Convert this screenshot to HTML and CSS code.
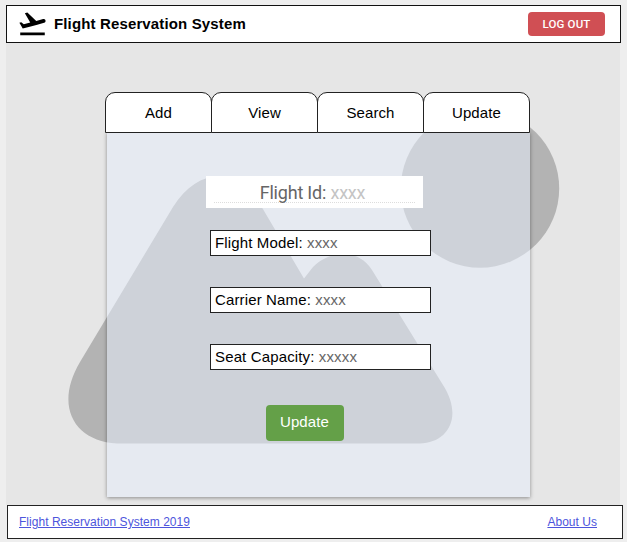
FILE: index.html
```html
<!DOCTYPE html>
<html lang="en">
<head>
<meta charset="utf-8">
<title>Flight Reservation System</title>
<link rel="stylesheet" href="styles.css">
</head>
<body>
<div class="page">
  <header class="header">
    <svg class="logo" viewBox="0 0 24 24"><path d="M2.500 19h19v2h-19zm19.570-9.360c-.21-.8-1.040-1.280-1.840-1.060L14.920 10l-6.900-6.430-1.930.51 4.140 7.170-4.970 1.330-1.970-1.540-1.450.39 1.820 3.160.77 1.330 1.600-.43 5.310-1.420 4.350-1.160L21 11.490c.81-.23 1.280-1.050 1.070-1.850z"/></svg>
    <h1 class="brand">Flight Reservation System</h1>
    <button class="logout">LOG OUT</button>
  </header>
  <main class="stage">
    <svg class="backdrop" viewBox="6 43 614 462">
      <circle cx="480" cy="188.500" r="79.200"/>
      <path d="M80 362 L173 207 C199 166 239 166 262 207.500 L304 278.500 L313 267 C331 249 359 249 372 270 L443 385 C464 418 447 443 420 443.500 L117 443.500 C74 441 54 406 80 362Z"/>
    </svg>
    <section class="content">
      <nav class="tabs">
        <a class="tab">Add</a><a class="tab">View</a><a class="tab">Search</a><a class="tab">Update</a>
      </nav>
      <form class="panel">
        <div class="flight-id"><div class="id-line">Flight Id: <span>xxxx</span></div></div>
        <div class="field">Flight Model: <span>xxxx</span></div>
        <div class="field">Carrier Name: <span>xxxx</span></div>
        <div class="field">Seat Capacity: <span>xxxxx</span></div>
        <button type="button" class="update">Update</button>
      </form>
    </section>
  </main>
  <footer class="footer"><a href="#">Flight Reservation System 2019</a><a href="#">About Us</a></footer>
</div>
</body>
</html>
```

FILE: styles.css
```css
* { box-sizing: border-box; }
body { margin: 0; background: #eee; font-family: "Liberation Sans", Arial, sans-serif; color: #000; }
.page { width: 627px; height: 542px; padding: 5px 5px 0 6px; overflow: hidden; }
.header { display: flex; align-items: center; width: 615px; height: 38px; padding: 0 15px 0 10px; background: #fff; border: 1px solid #111; }
.logo { width: 31px; height: 31px; margin-bottom: 2px; flex: none; }
.brand { margin: 0 auto 0 6px; font-size: 15px; line-height: 18px; letter-spacing: 0.14px; white-space: nowrap; }
.logout { width: 77px; height: 24px; margin-top: -1px; padding: 0; border: 0; border-radius: 4px; background: #d04f54; color: #fff; font: 500 11.500px/22px Roboto, sans-serif; letter-spacing: 0.15px; }
.stage { position: relative; width: 614px; height: 462px; padding: 49px 0 0 99px; background: #e6e6e6; }
.backdrop { position: absolute; top: 0; left: 0; width: 614px; height: 462px; fill: #b3b3b3; }
.content { position: relative; width: 425px; }
.tabs { display: flex; position: relative; z-index: 1; width: 424px; }
.tab { flex: 1; height: 41px; margin-right: -1px; border: 1px solid #222; border-radius: 10px 10px 0 0; background: #fff; font-size: 15px; line-height: 40px; letter-spacing: 0.1px; text-align: center; }
.panel { display: flex; flex-direction: column; width: 423px; height: 365px; margin: -1px 0 0 2px; padding: 44px 0 0 103px; background: rgba(231, 238, 252, 0.530); box-shadow: 0 1px 4px rgba(0, 0, 0, 0.400); }
.flight-id { width: 217px; height: 32px; margin: 0 0 22px -4px; padding: 3px 8px 0; background: #fff; }
.id-line { height: 24px; padding-right: 4px; border-bottom: 1px dotted #ddd; color: #666; font: 18px/27px Roboto, sans-serif; text-align: center; letter-spacing: -0.200px; }
.id-line span { color: #c4c4c4; }
.field { width: 221px; height: 26px; margin-bottom: 31px; padding-left: 4px; border: 1px solid #222; background: #fff; font-size: 15px; line-height: 24px; letter-spacing: 0.140px; white-space: nowrap; }
.field span { color: #666; }
.update { width: 78px; height: 36px; margin: 4px 0 0 56px; padding: 0 1px 3px 0; border: 0; border-radius: 4px; background: #64a048; color: #fff; font: 15px "Liberation Sans", Arial, sans-serif; letter-spacing: 0.1px; }
.footer { display: flex; justify-content: space-between; align-items: center; width: 616px; height: 34px; margin: 0 0 0 1px; padding: 0 25px 0 11px; position: relative; border: 1px solid #222; background: #fff; font-size: 12px; letter-spacing: 0.03px; }
.footer a { color: #4d55dc; }
```
